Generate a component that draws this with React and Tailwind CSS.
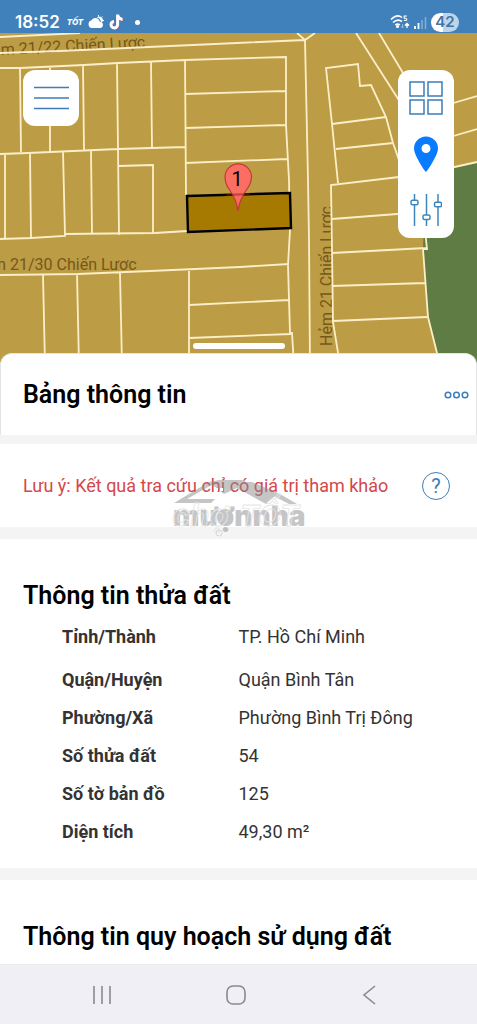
import React, { useState } from 'react';

const parcelInfo = [
  { label: 'Tỉnh/Thành', value: 'TP. Hồ Chí Minh' },
  { label: 'Quận/Huyện', value: 'Quận Bình Tân' },
  { label: 'Phường/Xã', value: 'Phường Bình Trị Đông' },
  { label: 'Số thửa đất', value: '54' },
  { label: 'Số tờ bản đồ', value: '125' },
  { label: 'Diện tích', value: '49,30 m²' },
];

// parcel borders and road edges
const mapLines = [
  'M0 37 80 33',
  'M0 53 60 51 237 43 305 40',
  'M0 68H20L84 65 118 63 185 60 286 57V125L289 180 290 230 288 265 290 333H292L294 365',
  'M20 68 21 152M50 67V152M83 65 84 150M117 63 119 235M151 62 152 147M185 60 186 195',
  'M0 154 28 153 118 149 185 147',
  'M185 94 286 91M185 128 286 125M185 163 287 159',
  'M5 154V239M30 153 31 238M63 151 65 236M91 151 92 234M118 166 153 165V233',
  'M0 239 31 238 65 236V234L155 233 187 231',
  'M0 275 78 274 150 271 240 267 289 264',
  'M43 275 45 365M77 274 79 365M120 273 122 365M189 269V365',
  'M189 305 289 300M189 338 291 334',
  'M297 33 305 40 315 33M305 40 308 180 309 240 310 365',
  'M338 183 332 124 326 68 358 64 360 86 371 85 386 117 393 143 399 160',
  'M332 124 386 117M336 149 393 143M399 177 331 185 332 250 333 322 340 365',
  'M332 219 410 213M332 253 426 248M332 286 425 283M333 321 427 317',
  'M425 230 427 249H423L428 317 440 365',
  'M356 33 402 105M379 33 406 78',
  'M450 104 477 96M450 137 477 129M450 168 477 162',
];

const ParcelMap = () => (
  <svg
    viewBox="0 33 477 330"
    preserveAspectRatio="xMidYMid slice"
    className="absolute inset-0 h-full w-full"
    aria-label="Bản đồ thửa đất"
  >
    <rect x="0" y="33" width="477" height="330" fill="#bc9c45" />
    <path d="M426 174 477 163V363H440L428 317 423 249Z" fill="#5f7c45" />
    <g fill="#75581a" fontFamily="Roboto, sans-serif" fontSize="16">
      <text x="1" y="55" transform="rotate(-3 0 55)">m 21/22 Chiến Lược</text>
      <text x="-8" y="270">m 21/30 Chiến Lược</text>
      <text x="332" y="346" transform="rotate(-90 332 346)">Hẻm 21 Chiến Lược</text>
    </g>
    <path d={mapLines.join('')} fill="none" stroke="#fcefc8" strokeWidth="1.8" />
    <path d="M187 196 290 193 291 228 188 232Z" fill="#a67900" stroke="#000" strokeWidth="2.4" />
    <path
      d="M238 211C237 202 234 196 229 189C225 184 225 180 225 176A13.300 13.300 0 0 1 251.500 176C251.500 180 251 184 247 189C242 196 239 202 238 211Z"
      fill="#ff6b66"
      fillOpacity=".93"
      stroke="#c23a36"
      strokeWidth="1.200"
    />
    <path d="M226.500 195 249.500 194" stroke="#8c2a20" strokeWidth="2" strokeOpacity=".5" />
    <text x="237" y="186" fontSize="20" textAnchor="middle" fontFamily="Roboto, sans-serif">1</text>
  </svg>
);

const WeatherIcon = () => (
  <svg width="16" height="14" viewBox="0 0 16 14" fill="#fff">
    <path d="M4 13A3.800 3.800 0 0 1 3.200 5.600 4.500 4.500 0 0 1 11.700 6.800 3.100 3.100 0 0 1 12 13Z" />
    <path d="M8.800 2.800A3.300 3.300 0 0 1 14 7.200L12.900 6.500A4.600 4.600 0 0 0 8.800 2.800Z" />
    <path d="M10.500 0V1.500M14.500 1.500 13.500 2.500M16 5.500H14.700" stroke="#fff" strokeWidth="1" />
  </svg>
);

const TikTokIcon = () => (
  <svg width="15" height="17" viewBox="0 0 15 17" fill="none" strokeWidth="3">
    <path d="M9.300 1V11A3.400 3.400 0 1 1 5.600 7.900M9.300 1.500C9.600 4.200 11.500 5.900 14.300 6.100" stroke="#e04468" strokeOpacity=".6" />
    <path d="M8.600 .5V10.500A3.300 3.300 0 1 1 5 7.400M8.600 .8C9 3.600 10.800 5.200 13.600 5.400" stroke="#fff" />
  </svg>
);

const StatusBar = () => (
  <header className="flex h-[33px] items-end justify-between bg-[#4081bb] pr-[18px] pb-px pl-[15px] text-white">
    <div className="flex h-5 items-center">
      <span className="font-[Inter,sans-serif] text-[17px] leading-5 font-semibold">18:52</span>
      <span className="ml-[7px] font-[Inter,sans-serif] text-[8px] leading-5 font-extrabold italic">TỐT</span>
      <span className="ml-[5px]"><WeatherIcon /></span>
      <span className="ml-[5px]"><TikTokIcon /></span>
      <span className="ml-[11px] size-[5px] rounded-full bg-white" />
    </div>
    <div className="flex h-5 items-center gap-1">
      <svg width="20" height="14" viewBox="0 0 20 14" fill="none" stroke="#fff" strokeWidth="1.600">
        <path d="M1 4.500Q7-1.500 12 2.500M3 7.500Q7.500 3.200 12 6.500M5.300 10Q7.500 8.200 9.800 10" />
        <circle cx="7.500" cy="11.500" r=".8" fill="#fff" />
        <path d="M17 1H14.200V3.200H15.500Q17 3.500 16.800 4.700T14 5.400" strokeWidth="1.100" />
        <path d="M17 13V8.500M15 10.500 17 8.500 19 10.500" strokeWidth="1.300" />
        <path d="M12.500 9V13M11 11.500 12.500 13 14 11.500" stroke="#94bddd" strokeWidth="1" />
      </svg>
      <svg width="13" height="13" viewBox="0 0 13 13">
        <path d="M1 13V10M4.500 13V7" stroke="#fff" strokeWidth="1.800" />
        <path d="M8 13V4M11.500 13V1" stroke="#83add4" strokeWidth="1.600" />
      </svg>
      <span className="flex h-[19px] w-7 items-center justify-center rounded-full bg-linear-to-r from-white from-42% to-[#bdd5ea] to-42% font-[Inter,sans-serif] text-[15px] leading-5 font-semibold text-[#3f74a3]">
        42
      </span>
    </div>
  </header>
);

const MapTools = () => (
  <div className="flex h-[168px] w-14 flex-col rounded-xl bg-white">
    <button aria-label="Lớp bản đồ" className="flex flex-1 items-center justify-center">
      <svg width="34" height="34" viewBox="0 0 34 34" fill="none" stroke="#3c7db9" strokeWidth="1.500">
        <path d="M1 1H15V15H1ZM19 1H33V15H19ZM1 19H15V33H1ZM19 19H33V33H19Z" />
      </svg>
    </button>
    <button aria-label="Vị trí" className="flex flex-1 items-center justify-center">
      <svg width="24" height="36" viewBox="0 0 24 36">
        <path
          fillRule="evenodd"
          d="M12 36C10 34 0 19 0 12.500A12 12 0 0 1 24 12.500C24 19 14 34 12 36ZM12 8A4.500 4.500 0 1 0 12 17A4.500 4.500 0 1 0 12 8Z"
          fill="#087bff"
        />
      </svg>
    </button>
    <button aria-label="Bộ lọc" className="flex flex-1 items-center justify-center">
      <svg width="32" height="32" viewBox="0 0 32 32" fill="none" stroke="#3c86bd" strokeWidth="1.500">
        <path d="M4.500 0V6M4.500 11V32M16.500 0V21M16.500 26V32M28 0V8M28 13V32" />
        <rect x="1" y="6.300" width="7" height="4.500" rx="1.500" />
        <rect x="13" y="21" width="7" height="4.500" rx="1.500" />
        <rect x="24.500" y="8.300" width="7" height="4.500" rx="1.500" />
      </svg>
    </button>
  </div>
);

const Watermark = () => (
  <svg
    width="134"
    height="60"
    viewBox="0 0 134 60"
    className="pointer-events-none absolute top-[35px] left-1/2 -translate-x-1/2"
    aria-hidden="true"
  >
    <g fill="#8c8c8c" opacity=".5">
      <path d="M2 24 37 3 45 3 15 20H43L39 24Z" />
      <path d="M37 3 47 1H70L104 16 94 25 65 9 52 15Z" />
      <path d="M74 3 80 3 108 15 125 25 117 25 94 13Z" />
      <text x="1" y="47" fontSize="28" fontWeight="900" fontFamily="Inter, sans-serif">
        mượnnha
      </text>
      <circle cx="53" cy="38" r="8" />
    </g>
    <path d="M43 9h3v3h-3zM48 9h3v3h-3z" fill="#fff" />
    <g fill="none" stroke="#e6e6e6" strokeWidth=".8">
      <text x="0" y="47" fontSize="31" fontWeight="700" fontStyle="italic" fontFamily="Inter, sans-serif">chợ</text>
      <text x="68" y="47" fontSize="29" fontWeight="700" fontStyle="italic" fontFamily="Inter, sans-serif">TỐT</text>
      <circle cx="47" cy="54" r="3" stroke="#cfcfcf" />
    </g>
  </svg>
);

const App = () => {
  const [menuOpen, setMenuOpen] = useState(false);

  return (
    <div className="flex min-h-screen flex-col bg-white font-[Roboto,sans-serif] text-black">
      <StatusBar />

      <section className="relative h-[330px]">
        <ParcelMap />
        <div className="relative flex items-start justify-between px-[23px] pt-[37px]">
          <button
            aria-label="Menu"
            aria-expanded={menuOpen}
            onClick={() => setMenuOpen(!menuOpen)}
            className="flex size-14 items-center justify-center rounded-xl bg-white"
          >
            <svg width="35" height="24" viewBox="0 0 35 24" stroke="#3c7db9" strokeWidth="1.700">
              <path d="M0 1.500H35M0 12H35M0 22.500H35" />
            </svg>
          </button>
          <MapTools />
        </div>
        <div className="absolute bottom-[14px] left-1/2 h-[6px] w-[92px] -translate-x-1/2 rounded-full bg-white" />
      </section>

      <main className="relative -mt-[10px] flex-1">
        {/* Sheet title */}
        <div className="flex h-[82px] items-center justify-between rounded-t-xl border-x border-t border-[#e4e4e4] bg-white pr-[7px] pl-[22px]">
          <h1 className="text-[25px] leading-8 font-semibold">Bảng thông tin</h1>
          <button aria-label="Thêm">
            <svg width="25" height="8" viewBox="0 0 25 8" fill="none" stroke="#3c7db9" strokeWidth="1.500">
              <circle cx="4" cy="4" r="2.800" />
              <circle cx="12.500" cy="4" r="2.800" />
              <circle cx="21" cy="4" r="2.800" />
            </svg>
          </button>
        </div>

        <div className="relative flex h-[104px] items-center justify-between border-t-[9px] border-b-[12px] border-[#f4f4f4] pr-[27px] pl-[23px]">
          <p className="text-lg text-[#d5474b]">Lưu ý: Kết quả tra cứu chỉ có giá trị tham khảo</p>
          <button
            aria-label="Trợ giúp"
            className="flex size-7 shrink-0 items-center justify-center rounded-full border border-[#3c7db9] text-xl leading-6 text-[#3c7db9]"
          >
            ?
          </button>
          <Watermark />
        </div>

        {/* Parcel info */}
        <section className="border-b-[12px] border-[#f4f4f4] px-[23px] pt-[41px] pb-[17px]">
          <h2 className="text-[25px] leading-8 font-semibold">Thông tin thửa đất</h2>
          <table className="mt-px w-full text-left text-lg text-[#333]">
            <tbody>
              {parcelInfo.map((row) => (
                <tr key={row.label} className="h-[38px] first:h-12">
                  <th scope="row" className="w-1/2 py-0 pl-[39px] align-middle font-bold">{row.label}</th>
                  <td className="py-0 align-middle">{row.value}</td>
                </tr>
              ))}
            </tbody>
          </table>
        </section>

        <section className="px-[23px] pt-[41px] pb-2">
          <h2 className="text-[25px] leading-8 font-semibold">Thông tin quy hoạch sử dụng đất</h2>
        </section>
      </main>

      <nav className="flex h-[60px] items-center justify-between border-t border-[#ececec] bg-[#f0eff5] pr-[97px] pl-[92px]">
        <button aria-label="Gần đây">
          <svg width="20" height="20" viewBox="0 0 20 20" stroke="#8a8a8e" strokeWidth="1.600">
            <path d="M2 1V19M10 1V19M18 1V19" />
          </svg>
        </button>
        <button aria-label="Trang chủ">
          <svg width="20" height="20" viewBox="0 0 20 20" fill="none" stroke="#8a8a8e" strokeWidth="1.600">
            <rect x="1" y="1" width="18" height="18" rx="6" />
          </svg>
        </button>
        <button aria-label="Quay lại">
          <svg width="20" height="20" viewBox="0 0 20 20" fill="none" stroke="#8a8a8e" strokeWidth="1.600">
            <path d="M15 1 4 10 15 19" />
          </svg>
        </button>
      </nav>
    </div>
  );
};

export default App;
